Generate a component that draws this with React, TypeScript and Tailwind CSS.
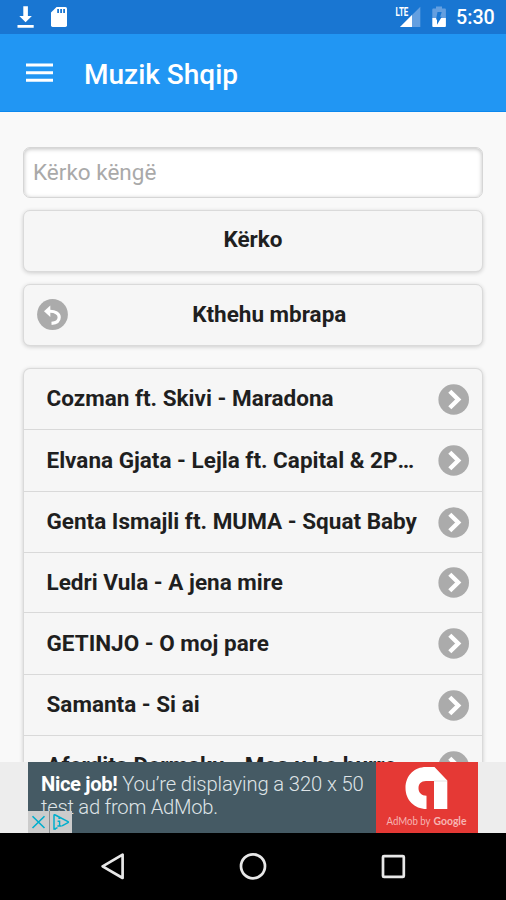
import React from "react";

const songs = [
  { title: "Cozman ft. Skivi - Maradona", height: "h-[61px]" },
  { title: "Elvana Gjata - Lejla ft. Capital & 2Pac", height: "h-[62px]" },
  { title: "Genta Ismajli ft. MUMA - Squat Baby", height: "h-[61px]" },
  { title: "Ledri Vula - A jena mire", height: "h-[60px]" },
  { title: "GETINJO - O moj pare", height: "h-[62px]" },
  { title: "Samanta - Si ai", height: "h-[61px]" },
  { title: "Aferdita Dermaku - Mos u be burre", height: "h-[61px]" },
];

const StatusBar = () => (
  <div className="flex h-[34px] shrink-0 items-center bg-[#1976d2] text-white">
    <svg className="ml-[17px] h-[34px] w-[17px]" viewBox="0 0 17 34" fill="currentColor">
      <path d="M6.3 6.2h4.6v9.8h4L8.6 22.2 2.3 16h4zM.5 25h16.2v2.8H.5z" />
    </svg>
    <svg className="ml-[17px] h-[34px] w-4" viewBox="0 0 16 34">
      <path
        d="M5.6 7H14.4Q16 7 16 8.6V25.3Q16 27 14.4 27H1.6Q0 27 0 25.3V12.6z"
        fill="currentColor"
      />
      <path d="M6.2 9h1.8v4H6.2zM9.2 9H11v4H9.2zM12.2 9H14v4h-1.8z" fill="#1976d2" />
    </svg>
    <div className="ml-auto flex items-center">
      <svg className="h-[34px] w-[26px]" viewBox="0 0 26 34">
        <path d="M25.3 6.7V27H5z" fill="#649fe0" />
        <path d="M17 15V27H5z" fill="currentColor" />
        <path d="M0 6h13.6v10.5H0z" fill="#1976d2" />
        <text
          x="0.5"
          y="15.8"
          textLength="12.8"
          lengthAdjust="spacingAndGlyphs"
          className="font-['Roboto'] text-[12px] font-bold"
          fill="currentColor"
        >
          LTE
        </text>
      </svg>
      <svg className="ml-[11px] h-[34px] w-[14px]" viewBox="0 0 14 34">
        <path d="M4 6.5h6v2h3q.9 0 .9.9V18H.3V9.4q0-.9.9-.9H4z" fill="#649fe0" />
        <path d="M.3 18h13.6v8.1q0 .9-.9.9H1.2q-.9 0-.9-.9z" fill="currentColor" />
        <path d="M5.5 12h4.2l-1.5 4.8h1.6L5 24.8v-5.4H4z" fill="#1976d2" />
      </svg>
      <span className="ml-[10px] mr-[11px] w-[39px] whitespace-nowrap pt-[2px] text-[19.7px] font-medium leading-[34px]">
        5:30
      </span>
    </div>
  </div>
);

const Header = () => (
  <header className="flex h-[78px] shrink-0 items-center border-b border-[#0c88ee] bg-[#2196f3] text-white">
    <svg className="ml-[26px] h-5 w-[27px]" viewBox="0 0 27 20" fill="currentColor">
      <path d="M0 .6h27v3H0zM0 8.2h27v3H0zM0 15.8h27v3H0z" />
    </svg>
    <h1 className="ml-[31px] pt-1 text-[28px] font-medium leading-8">Muzik Shqip</h1>
  </header>
);

const ChevronIcon = () => (
  <svg className="block h-[31px] w-[31px] shrink-0" viewBox="0 0 31 31">
    <circle cx="15.7" cy="15.5" r="15.3" fill="#ababab" />
    <path d="M11.8 7.3l8.4 8.2-8.4 8.2" fill="none" stroke="#fff" strokeWidth="4.4" />
  </svg>
);

const BackIcon = () => (
  <svg className="h-[31px] w-[31px] shrink-0" viewBox="0 0 31 31">
    <circle cx="15.5" cy="15.5" r="15.4" fill="#ababab" />
    <path d="M7 12.3L13.3 6.4V18z" fill="#fff" />
    <path
      d="M12 12.3C18.5 12 22.2 14.5 22.2 18.3C22.2 21.8 19.5 24.1 14.5 24.4"
      fill="none"
      stroke="#fff"
      strokeWidth="3.2"
    />
  </svg>
);

const AdBanner = () => (
  <div className="flex h-[71px] shrink-0 justify-center bg-[#ededed]">
    <div className="relative flex w-[450px] text-[#dfe4e7]">
      <div className="h-full w-[348px] bg-[#455a64] pl-[13px] pt-[11px] text-[20.2px] font-light leading-[23px]">
        <p className="whitespace-nowrap tracking-[-0.11px]">
          <span className="font-bold tracking-[-0.35px] text-white">Nice job!</span> You’re displaying a 320 x 50
        </p>
        <p className="whitespace-nowrap tracking-[-0.25px]">test ad from AdMob.</p>
      </div>
      <div className="h-full w-[102px] bg-[#e53935]">
        <svg className="h-[71px] w-[102px]" viewBox="1 0 102 71">
          <path
            d="M59.5 5L72.3 18.5V47H59V19H51C46 19 43.5 22 43.5 26.2C43.5 30.5 46.5 33.5 51.5 33.8V47C39.5 47 30.5 38 30.5 26C30.5 13.5 39.5 5 51 5z"
            fill="#fff"
          />
          <path d="M59 19h13" stroke="#e4e4e4" strokeWidth="1" />
          <text x="11.5" y="62.5" className="text-[10.8px]" fill="#f6b5b3" fontFamily="Lato">
            <tspan textLength="44" lengthAdjust="spacingAndGlyphs">AdMob by</tspan>
            <tspan x="58.5" textLength="33" lengthAdjust="spacingAndGlyphs" fontWeight="700">
              Google
            </tspan>
          </text>
        </svg>
      </div>
      <div className="absolute bottom-0 left-0 flex gap-px bg-[#8a8f91]">
        <svg className="h-[22px] w-[21px] bg-[#cccccc]" viewBox="0 0 21 22">
          <path d="M4.5 5.2L16.5 17M16.5 5.2L4.5 17" stroke="#00aecd" strokeWidth="1.6" />
        </svg>
        <svg className="h-[22px] w-[22px] bg-[#cccccc]" viewBox="0 0 22 22">
          <path
            d="M6 18L4 18V4.5Q4 3.3 5.3 4L18 10.7Q18.8 11.2 18 11.7L12 14.8M4 18.2L7.5 16.6"
            fill="none"
            stroke="#00aecd"
            strokeWidth="1.5"
          />
          <path d="M8.4 7.2h2M7.6 10.2h2v5M7.4 15h4.3" fill="none" stroke="#00aecd" strokeWidth="1.4" />
        </svg>
      </div>
    </div>
  </div>
);

const NavigationBar = () => (
  <nav className="flex h-[67px] shrink-0 items-center justify-center bg-black">
    <svg className="h-[67px] w-[306px]" viewBox="0 0 306 67" fill="none" stroke="#e8e8e8" strokeWidth="2.7">
      <path d="M22.6 21.6V45L2.6 33.3z" strokeLinejoin="round" />
      <circle cx="153" cy="33.3" r="12" />
      <rect x="283" y="23.1" width="20.8" height="20.8" rx="1" />
    </svg>
  </nav>
);

const App: React.FC = () => {
  return (
    <div className="flex h-[900px] w-[506px] flex-col overflow-hidden bg-[#f9f9f9] font-['Roboto',sans-serif]">
      <StatusBar />
      <Header />

      <main className="min-h-0 flex-1 overflow-hidden pl-[23px] pr-[23px] pt-[35px] text-[22.5px] text-[#1f1f1f]">
        <input
          type="text"
          placeholder="Kërko këngë"
          className="block h-[51px] w-full rounded-[7px] border border-[#d6d6d6] bg-white px-[9px] pb-[2px] shadow-[inset_0_1px_4px_rgba(0,0,0,0.25)] outline-none placeholder:text-[#a9a9a9]"
        />
        <button className="mt-3 flex h-[62px] w-full items-center justify-center rounded-[7px] border border-[#dadada] bg-[#f6f6f6] pb-[2px] font-bold shadow-[0_1px_4px_rgba(0,0,0,0.18)]">
          Kërko
        </button>
        <button className="mt-3 flex h-[62px] w-full items-center rounded-[7px] border border-[#dadada] bg-[#f6f6f6] pb-px pl-[12.5px] font-bold shadow-[0_1px_4px_rgba(0,0,0,0.18)]">
          <BackIcon />
          <span className="flex-1 pr-[11px]">Kthehu mbrapa</span>
        </button>

        <ul className="mt-[22px] rounded-t-[7px] border border-b-0 border-[#dadada] bg-[#f6f6f6] font-bold shadow-[0_1px_4px_rgba(0,0,0,0.18)]">
          {songs.map((song) => (
            <li
              key={song.title}
              className={`flex items-center border-b border-[#d9d9d9] pl-[22.5px] pr-[13px] ${song.height}`}
            >
              <span className="w-[371px] truncate">{song.title}</span>
              <span className="ml-auto">
                <ChevronIcon />
              </span>
            </li>
          ))}
        </ul>
      </main>

      <AdBanner />
      <NavigationBar />
    </div>
  );
};

export default App;
